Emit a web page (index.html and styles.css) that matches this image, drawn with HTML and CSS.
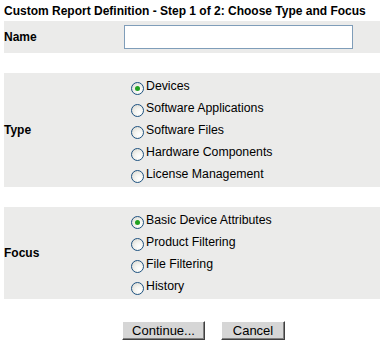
FILE: index.html
```html
<!DOCTYPE html>
<html lang="en">
<head>
  <meta charset="UTF-8" />
  <title>Custom Report Definition</title>
  <link rel="stylesheet" href="styles.css">
</head>
<body>
  <div class="page">
    <h1 class="title">Custom Report Definition - Step 1 of 2: Choose Type and Focus</h1>

    <div class="band band-name">
      <div class="label">Name</div>
      <div class="field"><input type="text" class="text-input" /></div>
    </div>

    <div class="band">
      <div class="label">Type</div>
      <div class="field options">
        <label class="option"><input type="radio" name="type" checked /><span>Devices</span></label>
        <label class="option"><input type="radio" name="type" /><span>Software Applications</span></label>
        <label class="option"><input type="radio" name="type" /><span>Software Files</span></label>
        <label class="option"><input type="radio" name="type" /><span>Hardware Components</span></label>
        <label class="option"><input type="radio" name="type" /><span>License Management</span></label>
      </div>
    </div>

    <div class="band">
      <div class="label">Focus</div>
      <div class="field options">
        <label class="option"><input type="radio" name="focus" checked /><span>Basic Device Attributes</span></label>
        <label class="option"><input type="radio" name="focus" /><span>Product Filtering</span></label>
        <label class="option"><input type="radio" name="focus" /><span>File Filtering</span></label>
        <label class="option"><input type="radio" name="focus" /><span>History</span></label>
      </div>
    </div>

    <div class="actions">
      <button class="btn btn-continue">Continue...</button>
      <button class="btn btn-cancel">Cancel</button>
    </div>
  </div>
</body>
</html>
```

FILE: styles.css
```css
body {
  margin: 0;
  background: #fff;
  color: #000;
  font-family: "Liberation Sans", Arial, sans-serif;
}
.page {
  width: 376px;
  padding: 0 4px;
}
.title {
  margin: 0;
  height: 21px;
  line-height: 22px;
  font-size: 12px;
  font-weight: bold;
  white-space: nowrap;
}
.band {
  display: flex;
  align-items: center;
  background: #ebebea;
  padding: 2px 0;
  margin-bottom: 20px;
}
.band-name {
  height: 32px;
  padding: 0;
}
.label {
  width: 120px;
  font-size: 12px;
  font-weight: bold;
}
.field {
  flex: 1;
}
.text-input {
  display: block;
  box-sizing: border-box;
  width: 229px;
  height: 24px;
  margin: 0;
  border: 1px solid #7f9db9;
  background: #fff;
}
.options {
  display: flex;
  flex-direction: column;
}
.option {
  display: flex;
  align-items: center;
  height: 22px;
  font-size: 12.3px;
}
.option input {
  appearance: none;
  -webkit-appearance: none;
  box-sizing: border-box;
  width: 13px;
  height: 13px;
  margin: 4px 2px 0 7px;
  border: 1px solid #1c5180;
  border-radius: 50%;
  background: radial-gradient(circle at 65% 70%, #fff 0, #f4f4f0 40%, #d6d4cc 100%);
  position: relative;
}
.option input:checked::after {
  content: "";
  position: absolute;
  left: 3px;
  top: 3px;
  width: 5px;
  height: 5px;
  border-radius: 50%;
  background: #21a121;
}
.actions {
  display: flex;
  gap: 16px;
  padding: 2px 0 0 118px;
}
.btn {
  box-sizing: border-box;
  height: 19px;
  padding: 0;
  font-family: "Liberation Sans", Arial, sans-serif;
  font-size: 13px;
  line-height: 15px;
  color: #000;
  background: #d6d6d6;
  border: 1px solid;
  border-color: #fff #404040 #404040 #fff;
  box-shadow: inset -1px -1px 0 #808080;
}
.btn-continue {
  width: 83px;
}
.btn-cancel {
  width: 64px;
}
```
